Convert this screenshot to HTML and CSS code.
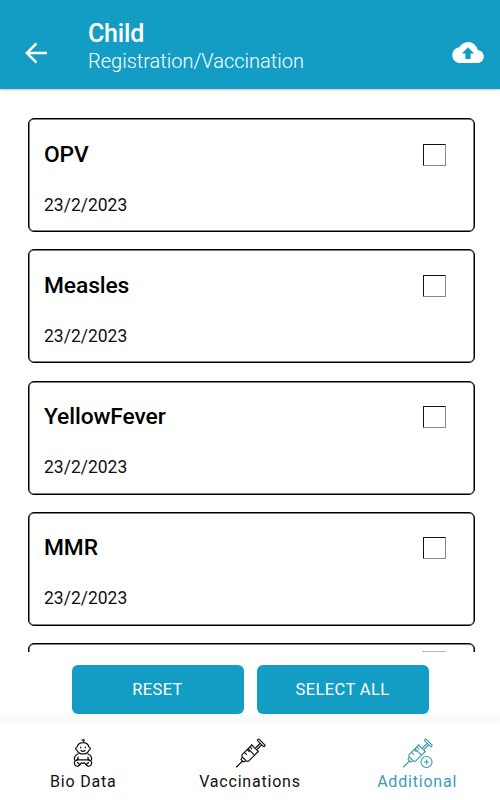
FILE: index.html
```html
<!DOCTYPE html>
<html lang="en">
<head>
<meta charset="utf-8">
<title>Child Registration</title>
<link rel="stylesheet" href="styles.css">
</head>
<body>
<div class="app">
  <header class="header">
    <svg class="back" viewBox="0 0 24 24"><path d="M24 12H2.500M12.500 1.500L2 12l10.500 10.500" fill="none" stroke="#fff" stroke-width="2.700"/></svg>
    <div class="titles">
      <h1>Child</h1>
      <p>Registration/Vaccination</p>
    </div>
    <svg class="cloud" viewBox="0 4 24 16"><path fill="#fff" d="M19.35 10.04A7.49 7.49 0 0 0 12 4C9.11 4 6.6 5.64 5.35 8.04A5.994 5.994 0 0 0 0 14c0 3.31 2.69 6 6 6h13c2.76 0 5-2.24 5-5 0-2.64-2.05-4.78-4.65-4.96zM14 12.700v4.300h-4v-4.300H7.300L12 8l4.700 4.700z"/></svg>
  </header>
  <main class="list">
    <article class="card"><h2>OPV</h2><span class="check"></span><time>23/2/2023</time></article>
    <article class="card"><h2>Measles</h2><span class="check"></span><time>23/2/2023</time></article>
    <article class="card"><h2>YellowFever</h2><span class="check"></span><time>23/2/2023</time></article>
    <article class="card"><h2>MMR</h2><span class="check"></span><time>23/2/2023</time></article>
    <article class="card clipped"><span class="check"></span></article>
  </main>
  <div class="actions">
    <button>RESET</button>
    <button>SELECT ALL</button>
  </div>
  <nav class="tabs">
    <a class="tab">
      <svg viewBox="0 0 32 32" fill="none" stroke="currentColor" stroke-width="1.25" stroke-linecap="round" stroke-linejoin="round">
        <path d="M14.800 3.200c2.600-1.500 3 .4 1.600 1.500M10 10a6.200 5.800 0 0 1 12 0c1.800.2 1.800 3 0 3.200a6.400 5.800 0 0 1-12 0c-1.800-.2-1.800-3 0-3.200z"/>
        <path d="M13.700 10.200v.6M18.300 10.200v.6M14 13.500c1.200 1.100 2.800 1.100 4 0"/>
        <path d="M11 17c-2.500 1-3.800 3.500-3.600 5.500.6 1.400 2.200 1.300 2.700.2l1-2M21 17c2.500 1 3.800 3.500 3.600 5.500-.6 1.400-2.200 1.300-2.700.2l-1-2M11 20v3M21 20v3M10.500 22.800h11"/>
        <path d="M10.300 23c-2.500.3-3.500 2.400-2.600 4.500 1 2.300 3.600 2.200 5 .5l1.700-2.200c1 .7 2.200.7 3.200 0l1.700 2.200c1.400 1.700 4 1.800 5-.5.9-2.100-.1-4.200-2.600-4.500M10.500 25.500l2.500 2.200M21.500 25.500L19 27.700"/>
      </svg>
      <span>Bio Data</span>
    </a>
    <a class="tab">
      <svg viewBox="0 0 32 32" fill="none" stroke="currentColor" stroke-width="1.150" stroke-linecap="round" stroke-linejoin="round">
        <path d="M2.500 30l5.500-5.500M7 22.500l2.500 2.500 2.500-1.300-3.700-3.700zM8.300 20c-.8-1-.5-2 .3-2.800l9.200-9.200 6.500 6.500-9.200 9.200c-.8.8-2 1-3 0M10.500 15.300l2 2M13.200 12.600l2 2M15.900 9.900l2 2M14 11.700l6.500 6.500M17.500 7.700l7 7M22 10.500l3.500-3.500M23.500 12l3.500-3.500M23.800 3.800l5.500 5.500c1 .7 2.300-.4 1.500-1.500l-5.500-5.500c-1-.8-2.300.4-1.500 1.500z"/>
      </svg>
      <span>Vaccinations</span>
    </a>
    <a class="tab active">
      <svg viewBox="0 0 32 32" fill="none" stroke="currentColor" stroke-width="1.150" stroke-linecap="round" stroke-linejoin="round">
        <path d="M2.500 30l5.500-5.500M7 22.500l2.500 2.500 2.500-1.300-3.700-3.700zM8.300 20c-.8-1-.5-2 .3-2.800l9.200-9.200 6.500 6.500-9.200 9.200c-.8.8-2 1-3 0M10.500 15.300l2 2M13.200 12.600l2 2M15.900 9.900l2 2M14 11.700l6.500 6.500M17.500 7.700l7 7M22 10.500l3.500-3.500M23.500 12l3.500-3.500M23.800 3.800l5.500 5.500c1 .7 2.300-.4 1.500-1.500l-5.500-5.500c-1-.8-2.300.4-1.500 1.500z"/>
        <circle cx="25.500" cy="25" r="5.500" fill="#fff"/><path d="M25.500 23v4M23.500 25h4"/>
      </svg>
      <span>Additional</span>
    </a>
  </nav>
</div>
</body>
</html>
```
FILE: styles.css
```css
* { box-sizing: border-box; }
body { margin: 0; background: #fff; font-family: Roboto, "Liberation Sans", sans-serif; }
h1, h2, p { margin: 0; }
.app { display: flex; flex-direction: column; width: 500px; height: 800px; overflow: hidden; }
.header { display: flex; align-items: flex-start; flex: none; height: 89px; padding: 19px 16px 0 25px; background: #139dc4; box-shadow: 0 1px 2px #bcc5c8; color: #fff; }
.back { width: 22px; height: 22px; margin-top: 23px; }
.titles { flex: 1; margin-left: 41px; }
h1 { font-size: 25px; line-height: 29px; font-weight: 500; letter-spacing: -0.200px; }
.titles p { font-size: 20px; line-height: 27px; font-weight: 300; }
.cloud { width: 32px; height: 21px; margin-top: 22.500px; }
.list { display: flex; flex-direction: column; gap: 17.300px; flex: none; height: 563px; padding: 29px 25px 0 28px; overflow: hidden; }
.card { display: grid; grid-template-columns: 1fr 23px; align-content: start; row-gap: 26px; flex: none; height: 114px; padding: 21.500px 28px 0 15px; border: 1px solid #000; border-radius: 6px; box-shadow: inset 0 0 0 0.500px #000; color: #000; }
h2 { grid-column: 1; font-size: 22.800px; line-height: 27px; font-weight: 500; letter-spacing: -0.100px; }
.check { grid-column: 2; width: 23px; height: 22px; margin-top: 3px; border: 1px solid #111; border-right-color: #888; border-bottom-color: #888; border-radius: 1px; }
.clipped { padding-top: 4px; }
.clipped .check { border-top-color: #bbb; }
time { grid-column: 1; font-size: 17.500px; line-height: 23px; color: #111; }
.actions { display: flex; justify-content: center; gap: 13px; flex: none; height: 71px; padding: 13px 0 9px; background: linear-gradient(#fff 80%, #f8f8f8); }
button { width: 172px; height: 49px; padding: 0; border: 0; border-radius: 6px; background: #139dc4; color: #fff; font: 400 16.500px/47px Roboto, sans-serif; letter-spacing: 0.400px; }
.tabs { display: grid; grid-template-columns: repeat(3, 1fr); flex: 1; padding-top: 14px; background: #fff; }
.tab { display: flex; flex-direction: column; align-items: center; color: #111; }
.tab svg { width: 32px; height: 32px; }
.tab span { margin-top: 1px; font-size: 16px; line-height: 24px; letter-spacing: 0.800px; }
.active { padding-left: 1px; color: #3e9caf; }
```
